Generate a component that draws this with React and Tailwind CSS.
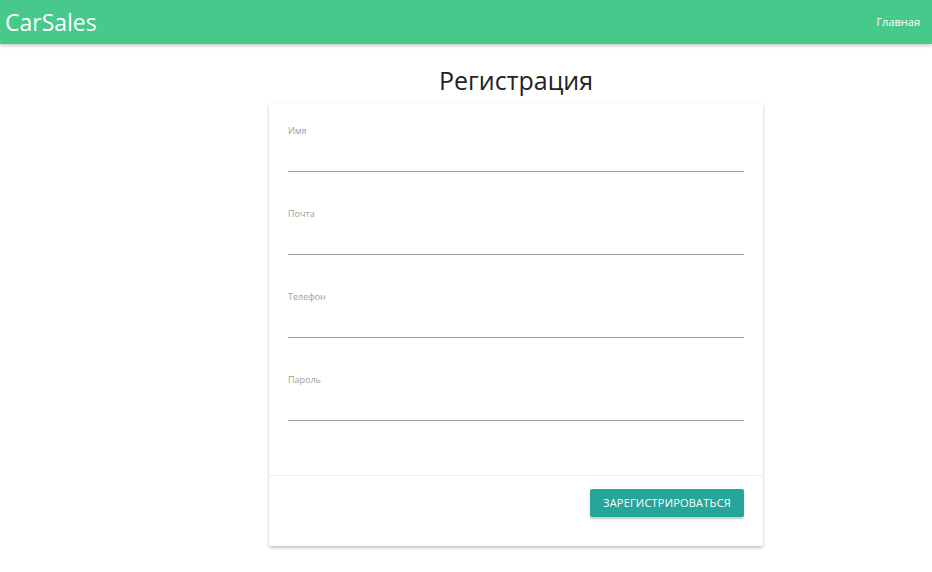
import React from "react";

const fields = ["Имя", "Почта", "Телефон", "Пароль"];

export default function App() {
  return (
    <div className="min-h-[572px] bg-white font-['Open_Sans',sans-serif]">
      <nav className="flex h-[44px] items-center justify-between bg-[#48c98c] pl-[5px] pr-[12px] shadow-[0_2px_3px_rgba(0,0,0,0.2)]">
        <span className="text-[23px] leading-none text-white">CarSales</span>
        <span className="text-[11px] text-white">Главная</span>
      </nav>

      <div className="flex justify-center pl-[100px]">
        <div className="w-[494px]">
          <h1 className="mt-[18px] mb-[5px] text-center text-[25px] leading-[36px] text-[#222]">
            Регистрация
          </h1>
          <div className="rounded-[2px] bg-white shadow-[0_2px_3px_rgba(0,0,0,0.22),0_0_2px_rgba(0,0,0,0.08)]">
            <div className="px-[19px] pt-[21px] pb-[19px]">
              {fields.map((f) => (
                <div key={f} className="mb-[35px]">
                  <div className="text-[9px] leading-[14px] text-[#9e9e9e]">{f}</div>
                  <input
                    className="block h-[34px] w-full border-b border-[#9e9e9e] bg-transparent outline-none"
                    type={f === "Пароль" ? "password" : "text"}
                  />
                </div>
              ))}
            </div>
            <div className="flex justify-end border-t border-[#eeeeee] px-[19px] pt-[13px] pb-[29px]">
              <button className="h-[28px] w-[154px] rounded-[2px] bg-[#26a69a] text-[11px] tracking-[0.2px] text-white shadow-[0_2px_2px_rgba(0,0,0,0.2)]">
                ЗАРЕГИСТРИРОВАТЬСЯ
              </button>
            </div>
          </div>
        </div>
      </div>
    </div>
  );
}
